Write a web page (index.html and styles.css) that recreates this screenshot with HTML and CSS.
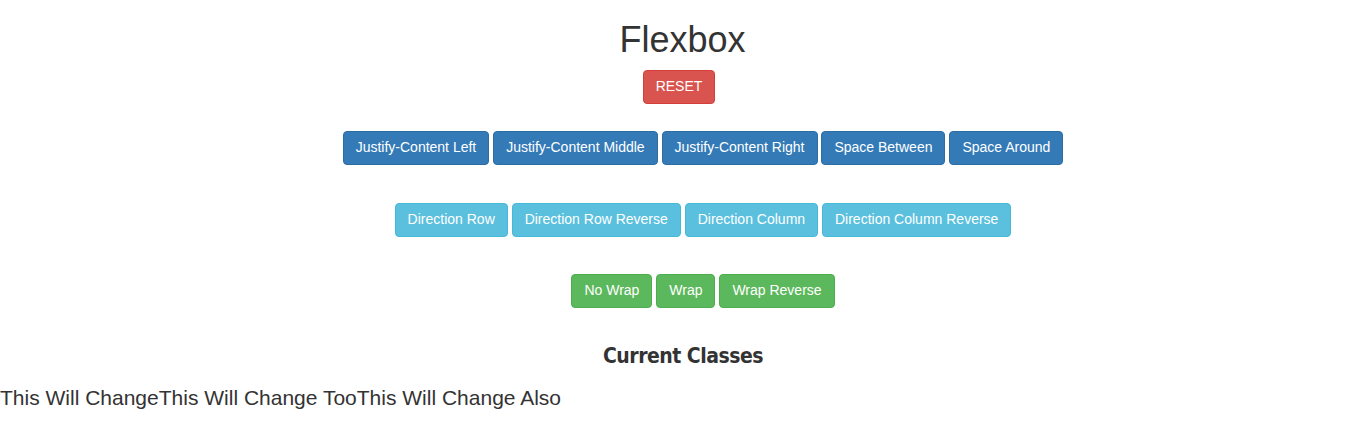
FILE: index.html
```html
<!DOCTYPE html>
<html>
<head>
<meta charset="utf-8">
<title>Flexbox</title>
<link rel="stylesheet" href="styles.css">
</head>
<body>
<h1 class="title">Flexbox</h1>
<div class="reset-row"><button class="btn btn-danger">RESET</button></div>
<div class="btn-row row-justify">
  <button class="btn btn-primary">Justify-Content Left</button>
  <button class="btn btn-primary">Justify-Content Middle</button>
  <button class="btn btn-primary">Justify-Content Right</button>
  <button class="btn btn-primary">Space Between</button>
  <button class="btn btn-primary">Space Around</button>
</div>
<div class="btn-row row-direction">
  <button class="btn btn-info">Direction Row</button>
  <button class="btn btn-info">Direction Row Reverse</button>
  <button class="btn btn-info">Direction Column</button>
  <button class="btn btn-info">Direction Column Reverse</button>
</div>
<div class="btn-row row-wrap">
  <button class="btn btn-success">No Wrap</button>
  <button class="btn btn-success">Wrap</button>
  <button class="btn btn-success">Wrap Reverse</button>
</div>
<h3 class="classes-title">Current Classes</h3>
<div class="items"><span class="item">This Will Change</span><span class="item">This Will Change Too</span><span class="item">This Will Change Also</span></div>
</body>
</html>
```
FILE: styles.css
```css
html, body {
  margin: 0;
  padding: 0;
  background: #fff;
}
body {
  font-family: "Liberation Sans", Arial, Helvetica, sans-serif;
  font-size: 14px;
  line-height: 1.42857;
  color: #333;
}
.title {
  margin: 20px 0 10px;
  font-size: 36px;
  font-weight: 500;
  line-height: 1.1;
  text-align: center;
  padding-left: 3px;
}
.reset-row {
  text-align: center;
  margin-left: -4px;
}
.btn {
  display: inline-block;
  margin: 0;
  padding: 6px 12px;
  font-family: "Liberation Sans", Arial, Helvetica, sans-serif;
  font-size: 14px;
  line-height: 1.42857;
  font-weight: 400;
  text-align: center;
  white-space: nowrap;
  vertical-align: middle;
  border: 1px solid transparent;
  border-radius: 4px;
  color: #fff;
  cursor: pointer;
}
.btn-danger { background: #d9534f; border-color: #d43f3a; }
.btn-primary { background: #337ab7; border-color: #2e6da4; }
.btn-info { background: #5bc0de; border-color: #46b8da; }
.btn-success { background: #5cb85c; border-color: #4cae4c; }
.btn-row {
  text-align: center;
  padding-left: 44px;
}
.row-justify { margin-top: 27px; }
.row-direction { margin-top: 38px; }
.row-wrap { margin-top: 37px; }
.classes-title {
  margin: 35px 0 0;
  font-family: "DejaVu Sans Condensed", "DejaVu Sans", sans-serif;
  font-weight: 700;
  font-size: 21px;
  letter-spacing: -0.5px;
  line-height: 26px;
  text-align: center;
  padding-left: 4px;
}
.items {
  margin-top: 15px;
  font-size: 21px;
  line-height: 28px;
}
```
